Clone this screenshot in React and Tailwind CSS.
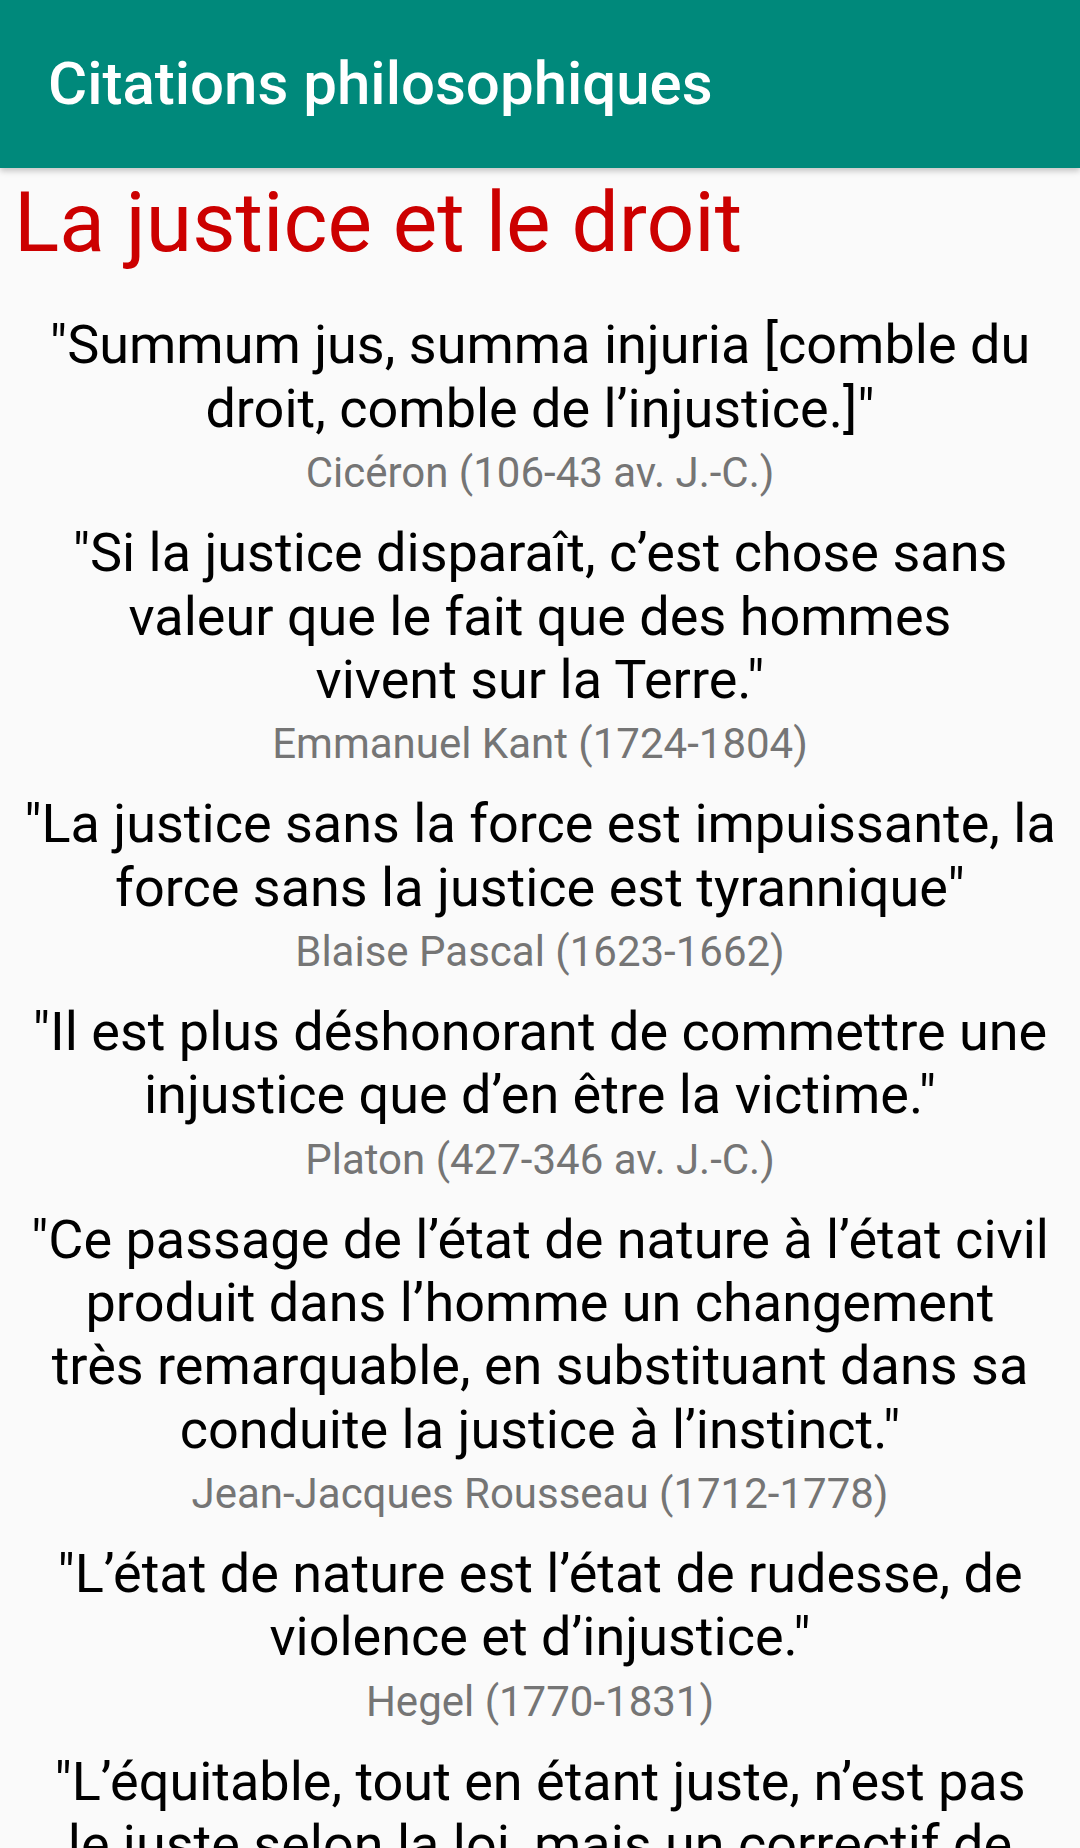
// line breaks follow the reference (Android's high-quality breaking, not greedy)
const quotes = [
  {
    lines: ["\"Summum jus, summa injuria [comble du", "droit, comble de l’injustice.]\""],
    author: "Cicéron (106-43 av. J.-C.)",
  },
  {
    lines: [
      "\"Si la justice disparaît, c’est chose sans",
      "valeur que le fait que des hommes",
      "vivent sur la Terre.\"",
    ],
    author: "Emmanuel Kant (1724-1804)",
  },
  {
    lines: [
      "\"La justice sans la force est impuissante, la",
      "force sans la justice est tyrannique\"",
    ],
    author: "Blaise Pascal (1623-1662)",
  },
  {
    lines: ["\"Il est plus déshonorant de commettre une", "injustice que d’en être la victime.\""],
    author: "Platon (427-346 av. J.-C.)",
  },
  {
    lines: [
      "\"Ce passage de l’état de nature à l’état civil",
      "produit dans l’homme un changement",
      "très remarquable, en substituant dans sa",
      "conduite la justice à l’instinct.\"",
    ],
    author: "Jean-Jacques Rousseau (1712-1778)",
  },
  {
    lines: ["\"L’état de nature est l’état de rudesse, de", "violence et d’injustice.\""],
    author: "Hegel (1770-1831)",
  },
  {
    lines: [
      "\"L’équitable, tout en étant juste, n’est pas",
      "le juste selon la loi, mais un correctif de",
      "la justice légale.\"",
    ],
    author: "Aristote (384-322 av. J.-C.)",
  },
];

export default function App() {
  return (
    <div
      className="h-[1848px] overflow-hidden bg-[#fafafa]"
      style={{ fontFamily: "Roboto, 'Noto Sans', sans-serif" }}
    >
      {/* Toolbar */}
      <header className="relative z-10 flex h-[168px] items-center bg-[#00897b] pl-[48px] shadow-[0_3px_6px_rgba(0,0,0,0.22)]">
        <h1 className="text-[60px] font-medium leading-[1.172] text-white">
          Citations philosophiques
        </h1>
      </header>

      {/* Chapter title */}
      <h2 className="mt-[6px] pl-[14px] text-[84px] leading-[1.172] text-[#cc0000]">
        La justice et le droit
      </h2>

      {/* Quotes */}
      <div className="mt-[41px] flex flex-col gap-[24px] px-[10px]">
        {quotes.map((q) => (
          <div key={q.author} className="flex flex-col items-center text-center">
            <p className="text-[54px] leading-[1.172] text-black">
              {q.lines.map((line) => (
                <span key={line} className="block whitespace-nowrap">
                  {line}
                </span>
              ))}
            </p>
            <p className="mt-[8px] text-[42px] leading-[1.172] text-[#757575]">{q.author}</p>
          </div>
        ))}
      </div>
    </div>
  );
}
